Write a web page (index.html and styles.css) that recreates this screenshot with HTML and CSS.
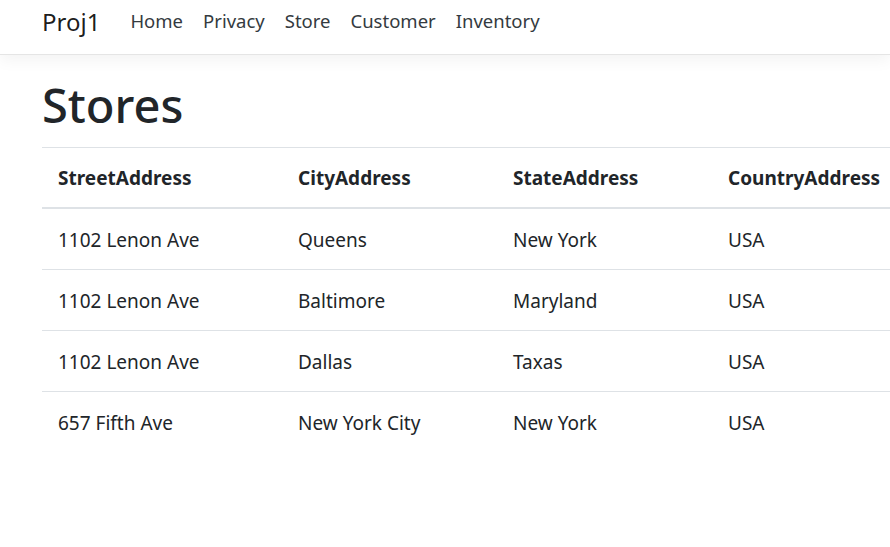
FILE: index.html
```html
<!DOCTYPE html>
<html lang="en">
<head>
<meta charset="utf-8">
<title>Stores - Proj1</title>
<link rel="stylesheet" href="styles.css">
</head>
<body>
<header class="navbar">
  <div class="nav-inner">
    <a class="brand" href="#">Proj1</a>
    <ul class="nav-links">
      <li><a href="#">Home</a></li>
      <li><a href="#">Privacy</a></li>
      <li><a href="#">Store</a></li>
      <li><a href="#">Customer</a></li>
      <li><a href="#">Inventory</a></li>
    </ul>
  </div>
</header>
<main class="container">
  <h1 class="title">Stores</h1>
  <div class="table-wrap">
  <table class="table">
    <colgroup>
      <col class="c1"><col class="c2"><col class="c3"><col class="c4">
    </colgroup>
    <thead>
      <tr><th>StreetAddress</th><th>CityAddress</th><th>StateAddress</th><th>CountryAddress</th></tr>
    </thead>
    <tbody>
      <tr><td>1102 Lenon Ave</td><td>Queens</td><td>New York</td><td>USA</td></tr>
      <tr><td>1102 Lenon Ave</td><td>Baltimore</td><td>Maryland</td><td>USA</td></tr>
      <tr><td>1102 Lenon Ave</td><td>Dallas</td><td>Taxas</td><td>USA</td></tr>
      <tr><td>657 Fifth Ave</td><td>New York City</td><td>New York</td><td>USA</td></tr>
    </tbody>
  </table>
  </div>
</main>
</body>
</html>
```

FILE: styles.css
```css
html, body {
  margin: 0;
  padding: 0;
  overflow-x: hidden;
}
body {
  font-family: "Noto Sans", "Open Sans", sans-serif;
  font-size: 19px;
  line-height: 1.5;
  color: #212529;
  background: #fff;
}
a { text-decoration: none; }

.navbar {
  border-bottom: 1px solid #e5e5e5;
  box-shadow: 0 5px 15px rgba(0, 0, 0, 0.05);
  background: #fff;
  height: 55px;
  box-sizing: border-box;
}
.nav-inner {
  display: flex;
  align-items: center;
  height: 100%;
  padding: 0 0 11px 42px;
  box-sizing: border-box;
}
.brand {
  font-size: 24px;
  color: rgba(0, 0, 0, 0.9);
  margin-right: 20px;
  line-height: 1;
}
.nav-links {
  display: flex;
  list-style: none;
  margin: 0;
  padding: 0;
}
.nav-links a {
  display: block;
  color: #343a40;
  font-size: 18.5px;
  padding: 0 10px;
  line-height: 1;
}

.container {
  padding: 22px 0 0 42px;
}
.title {
  font-size: 47px;
  font-weight: 500;
  line-height: 1.2;
  margin: 0 0 10px;
  height: 60px;
  color: #212529;
}
.table-wrap {
  overflow: hidden;
}
.table {
  border-collapse: collapse;
  table-layout: fixed;
  width: 900px;
}
.c1 { width: 240px; }
.c2 { width: 215px; }
.c3 { width: 215px; }
.c4 { width: 230px; }
.table th, .table td {
  text-align: left;
  padding: 16px 16px 14px;
  height: 30px;
  line-height: 30px;
  border-top: 1px solid #dee2e6;
  vertical-align: top;
  white-space: nowrap;
}
.table th {
  font-weight: 700;
  border-bottom: 2px solid #dee2e6;
}
.table thead th { height: 29px; line-height: 29px; }
```
